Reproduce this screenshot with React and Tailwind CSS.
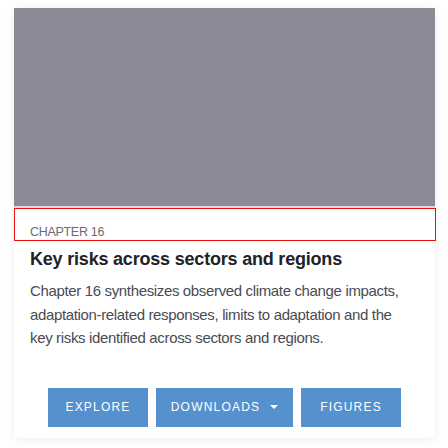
import React from "react";

export default function App() {
  return (
    <div className="w-[448px] h-[448px] bg-white overflow-hidden" style={{ fontFamily: '"Liberation Sans", Arial, sans-serif' }}>
      <div className="ml-[14px] mt-[8px] w-[421px] bg-white shadow-[0_1px_8px_rgba(0,0,0,0.08)] pb-[11px]">
        <div className="h-[198px] bg-[#8b8a96]" />
        <div className="h-[2px] bg-[#d9d9df]" />
        <div className="relative h-[33px] border border-[#e8120c] w-[422px] flex items-end pl-[15px] pb-[1px]">
          <span className="text-[12.5px] leading-[13px] text-[#6b6b72] tracking-[-0.3px]">CHAPTER 16</span>
        </div>
        <div className="px-[16px]">
          <h2 className="mt-[6px] text-[18px] leading-[24px] font-bold text-[#222226] tracking-[-0.2px]">Key risks across sectors and regions</h2>
          <p className="mt-[8px] w-[372px] text-[15px] leading-[23.5px] tracking-[-0.35px] text-[#4a4a52]">
            Chapter 16 synthesizes observed climate change impacts, adaptation-related responses, limits to adaptation and the key risks identified across sectors and regions.
          </p>
          <div className="mt-[38px] flex justify-center gap-[8px]">
            <button className="w-[100px] h-[39px] bg-[#5591cf] text-white text-[12px] tracking-[1.2px]">EXPLORE</button>
            <button className="w-[137px] h-[39px] bg-[#5591cf] text-white text-[12px] tracking-[1.2px] flex items-center justify-center gap-[10px]">
              DOWNLOADS
              <svg width="8" height="5" viewBox="0 0 8 5"><path d="M0 0h8L4 4z" fill="white" /></svg>
            </button>
            <button className="w-[100px] h-[39px] bg-[#5591cf] text-white text-[12px] tracking-[1.2px]">FIGURES</button>
          </div>
        </div>
      </div>
    </div>
  );
}
